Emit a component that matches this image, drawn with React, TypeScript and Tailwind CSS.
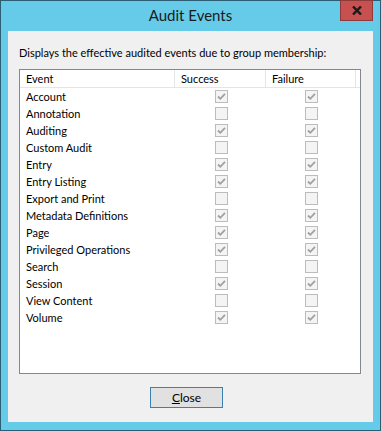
// Audit Events dialog (Windows 8 style)

const events: { name: string; success: boolean; failure: boolean }[] = [
  { name: 'Account', success: true, failure: true },
  { name: 'Annotation', success: false, failure: false },
  { name: 'Auditing', success: true, failure: true },
  { name: 'Custom Audit', success: false, failure: false },
  { name: 'Entry', success: true, failure: true },
  { name: 'Entry Listing', success: true, failure: true },
  { name: 'Export and Print', success: false, failure: false },
  { name: 'Metadata Definitions', success: true, failure: true },
  { name: 'Page', success: true, failure: true },
  { name: 'Privileged Operations', success: true, failure: true },
  { name: 'Search', success: false, failure: false },
  { name: 'Session', success: true, failure: true },
  { name: 'View Content', success: false, failure: false },
  { name: 'Volume', success: true, failure: true },
];

function Check({ checked }: { checked: boolean }) {
  return (
    <div className="w-[13px] h-[13px] border border-[#bcbcbc] bg-[#f4f4f4] flex items-center justify-center">
      {checked && (
        <svg width="11" height="11" viewBox="0 0 11 11">
          <path d="M2 5.5 L4.3 7.8 L9 2.8" fill="none" stroke="#a0a0a0" strokeWidth="1.8" />
        </svg>
      )}
    </div>
  );
}

export default function App() {
  return (
    <div
      className="w-[381px] h-[431px] bg-[#66cbe9] border border-[#2b5d73] flex flex-col text-[11px] text-black"
      style={{ fontFamily: 'Lato, "Noto Sans", sans-serif' }}
    >
      {/* Title bar */}
      <div className="relative h-[30px] flex items-center justify-center">
        <span className="text-[15px] text-[#1a1a1a] mt-[-1px]">Audit Events</span>
        <div className="absolute top-[-1px] right-[7px] w-[33px] h-[21px] bg-[#c75050] border border-[#8f3a3a] flex items-center justify-center">
          <svg width="10" height="9" viewBox="0 0 10 9">
            <path d="M1 0.5 L9 8.5 M9 0.5 L1 8.5" stroke="#1a1a1a" strokeWidth="2.4" />
          </svg>
        </div>
      </div>

      {/* Client area */}
      <div className="mx-[7px] h-[391px] bg-[#f0f0f0] flex flex-col pl-[11px] pr-[12px]">
        <p className="mt-[13px] h-[25px] leading-[17px] whitespace-nowrap">
          Displays the effective audited events due to group membership:
        </p>

        {/* List view */}
        <div className="h-[305px] border border-[#828790] bg-white flex flex-col">
          <div className="flex h-[18px] border-b border-[#e5e5e5] items-center">
            <div className="w-[155px] h-full border-r border-[#e5e5e5] pl-[6px] leading-[17px]">Event</div>
            <div className="w-[91px] h-full border-r border-[#e5e5e5] pl-[6px] leading-[17px]">Success</div>
            <div className="w-[90px] h-full border-r border-[#e5e5e5] pl-[6px] leading-[17px]">Failure</div>
          </div>
          {events.map((e) => (
            <div key={e.name} className="flex h-[17px] items-center">
              <div className="w-[155px] pl-[6px] leading-[17px] whitespace-nowrap">{e.name}</div>
              <div className="w-[91px] flex justify-center pl-[1px]">
                <Check checked={e.success} />
              </div>
              <div className="w-[90px] flex justify-center pl-[1px]">
                <Check checked={e.failure} />
              </div>
            </div>
          ))}
        </div>

        {/* Close button */}
        <div className="pt-[13px] pl-[131px]">
          <div className="w-[73px] h-[21px] border border-[#3c7fb1] bg-[#e1e1e1] flex items-center justify-center">
            <span className="leading-none text-[12px]">
              <span className="underline">C</span>lose
            </span>
          </div>
        </div>
      </div>
    </div>
  );
}
